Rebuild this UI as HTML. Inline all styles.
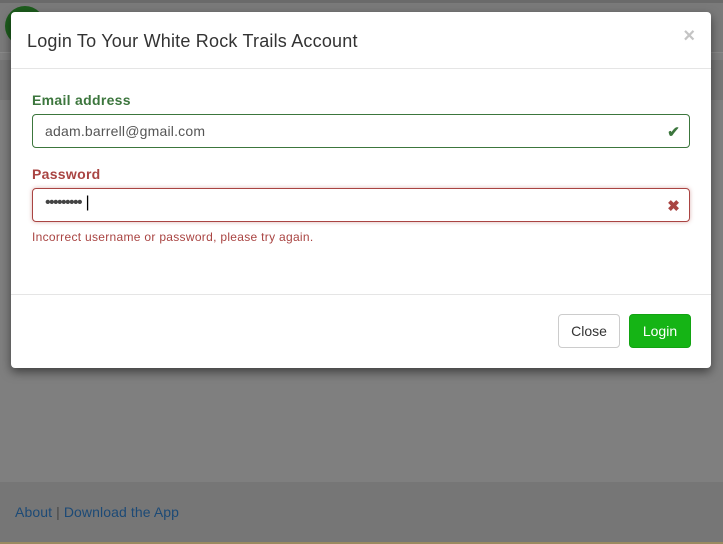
<!DOCTYPE html>
<html><head><style>
body{margin:0;width:723px;height:544px;background:#7f7f7f;font-family:"Liberation Sans",sans-serif;position:relative;overflow:hidden}
.top{position:absolute;left:0;top:0;width:723px;height:3px;background:#6a6a6a}
.nav{position:absolute;left:0;top:3px;width:723px;height:49px;background:#7a7a7a;border-bottom:1px solid #8a8a8a}
.band{position:absolute;left:0;top:60px;width:723px;height:40px;background:#767676}
.logo{position:absolute;left:5px;top:6px;width:40px;height:40px;border-radius:50%;background:#1d5d1d}
.foot{position:absolute;left:0;top:482px;width:723px;height:60px;background:#767676}
.foot span{position:absolute;left:15px;top:22px;font-size:14px;color:#1c4a76;letter-spacing:.1px}
.foot i{font-style:normal;color:#444}
.bline{position:absolute;left:0;top:542px;width:723px;height:2px;background:#9a8a60}
.modal{position:absolute;left:11px;top:12px;width:700px;height:356px;background:#fff;border-radius:4px;box-shadow:0 4px 10px rgba(0,0,0,.5)}
.hd{height:56px;border-bottom:1px solid #e5e5e5;position:relative}
.hd h4{margin:0;position:absolute;left:16px;top:19px;font-size:18px;font-weight:normal;color:#333;letter-spacing:.2px}
.x{position:absolute;right:16px;top:13px;font-size:20px;color:#c4c4c4;font-weight:bold}
label{position:absolute;left:21px;font-size:14px;font-weight:bold;letter-spacing:.3px}
.in{position:absolute;left:21px;width:656px;height:32px;border-radius:4px;font-size:14px;color:#555}
.in span{position:absolute;left:12px;top:8px;letter-spacing:.2px}
.ic{position:absolute;right:9px;top:8px;font-size:15px;font-weight:bold}
.ft{position:absolute;left:0;top:282px;width:700px;border-top:1px solid #e5e5e5}
.btn{position:absolute;top:302px;height:32px;border-radius:4px;font-size:14px;line-height:32px;text-align:center}
</style></head><body>
<div class="top"></div><div class="nav"></div><div class="band"></div><div class="logo"></div>
<div class="foot"><span>About <i>|</i> Download the App</span></div><div class="bline"></div>
<div class="modal">
<div class="hd"><h4>Login To Your White Rock Trails Account</h4><div class="x">×</div></div>
<label style="top:80px;color:#3c763d">Email address</label>
<div class="in" style="top:102px;border:1px solid #3c763d"><span>adam.barrell@gmail.com</span><span class="ic" style="left:auto;color:#3c763d">✔</span></div>
<label style="top:154px;color:#a94442">Password</label>
<div class="in" style="top:176px;border:1px solid #a94442;box-shadow:0 0 4px rgba(169,68,66,.4)"><span style="top:5px;letter-spacing:-1.6px;font-size:16px;color:#444">•••••••••<b style="font-weight:normal;color:#000;letter-spacing:0"> |</b></span><span class="ic" style="left:auto;color:#a94442">✖</span></div>
<div style="position:absolute;left:21px;top:218px;font-size:12px;color:#a94442;letter-spacing:.3px">Incorrect username or password, please try again.</div>
<div class="ft"></div>
<div class="btn" style="left:547px;width:60px;border:1px solid #ccc;color:#333">Close</div>
<div class="btn" style="left:618px;width:60px;border:1px solid #12a312;background:#15b415;color:#fff">Login</div>
</div>
</body></html>
